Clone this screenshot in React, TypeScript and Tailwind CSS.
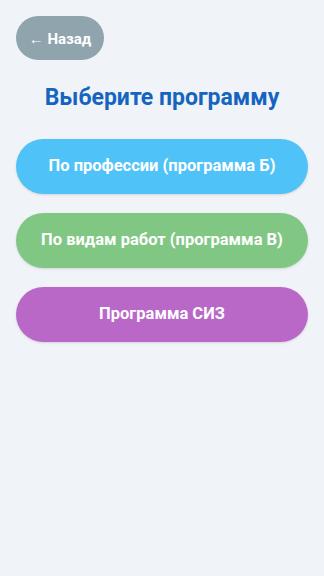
import React from "react"

const programs = [
  { label: "По профессии (программа Б)", color: "bg-[#4fc3f7]" },
  { label: "По видам работ (программа В)", color: "bg-[#81c784]" },
  { label: "Программа СИЗ", color: "bg-[#ba68c8]" },
]

export default function App() {
  return (
    <div
      className="min-h-screen bg-[#f0f4f9] p-4"
      style={{ fontFamily: "Roboto, 'Noto Sans', sans-serif" }}
    >
      <button className="flex h-[44px] w-[88px] items-center justify-center rounded-full bg-[#90a4ae] pt-[3px] text-[15px] font-bold text-white">
        ← Назад
      </button>

      <h1 className="mt-[24px] text-center text-[23px] leading-[28px] font-bold text-[#1565c0]">
        Выберите программу
      </h1>

      <div className="mt-[27px] flex flex-col gap-[19px]">
        {programs.map((p) => (
          <button
            key={p.label}
            className={`h-[55px] w-full rounded-full ${p.color} text-[16.5px] font-bold text-white shadow-sm`}
          >
            {p.label}
          </button>
        ))}
      </div>
    </div>
  )
}
